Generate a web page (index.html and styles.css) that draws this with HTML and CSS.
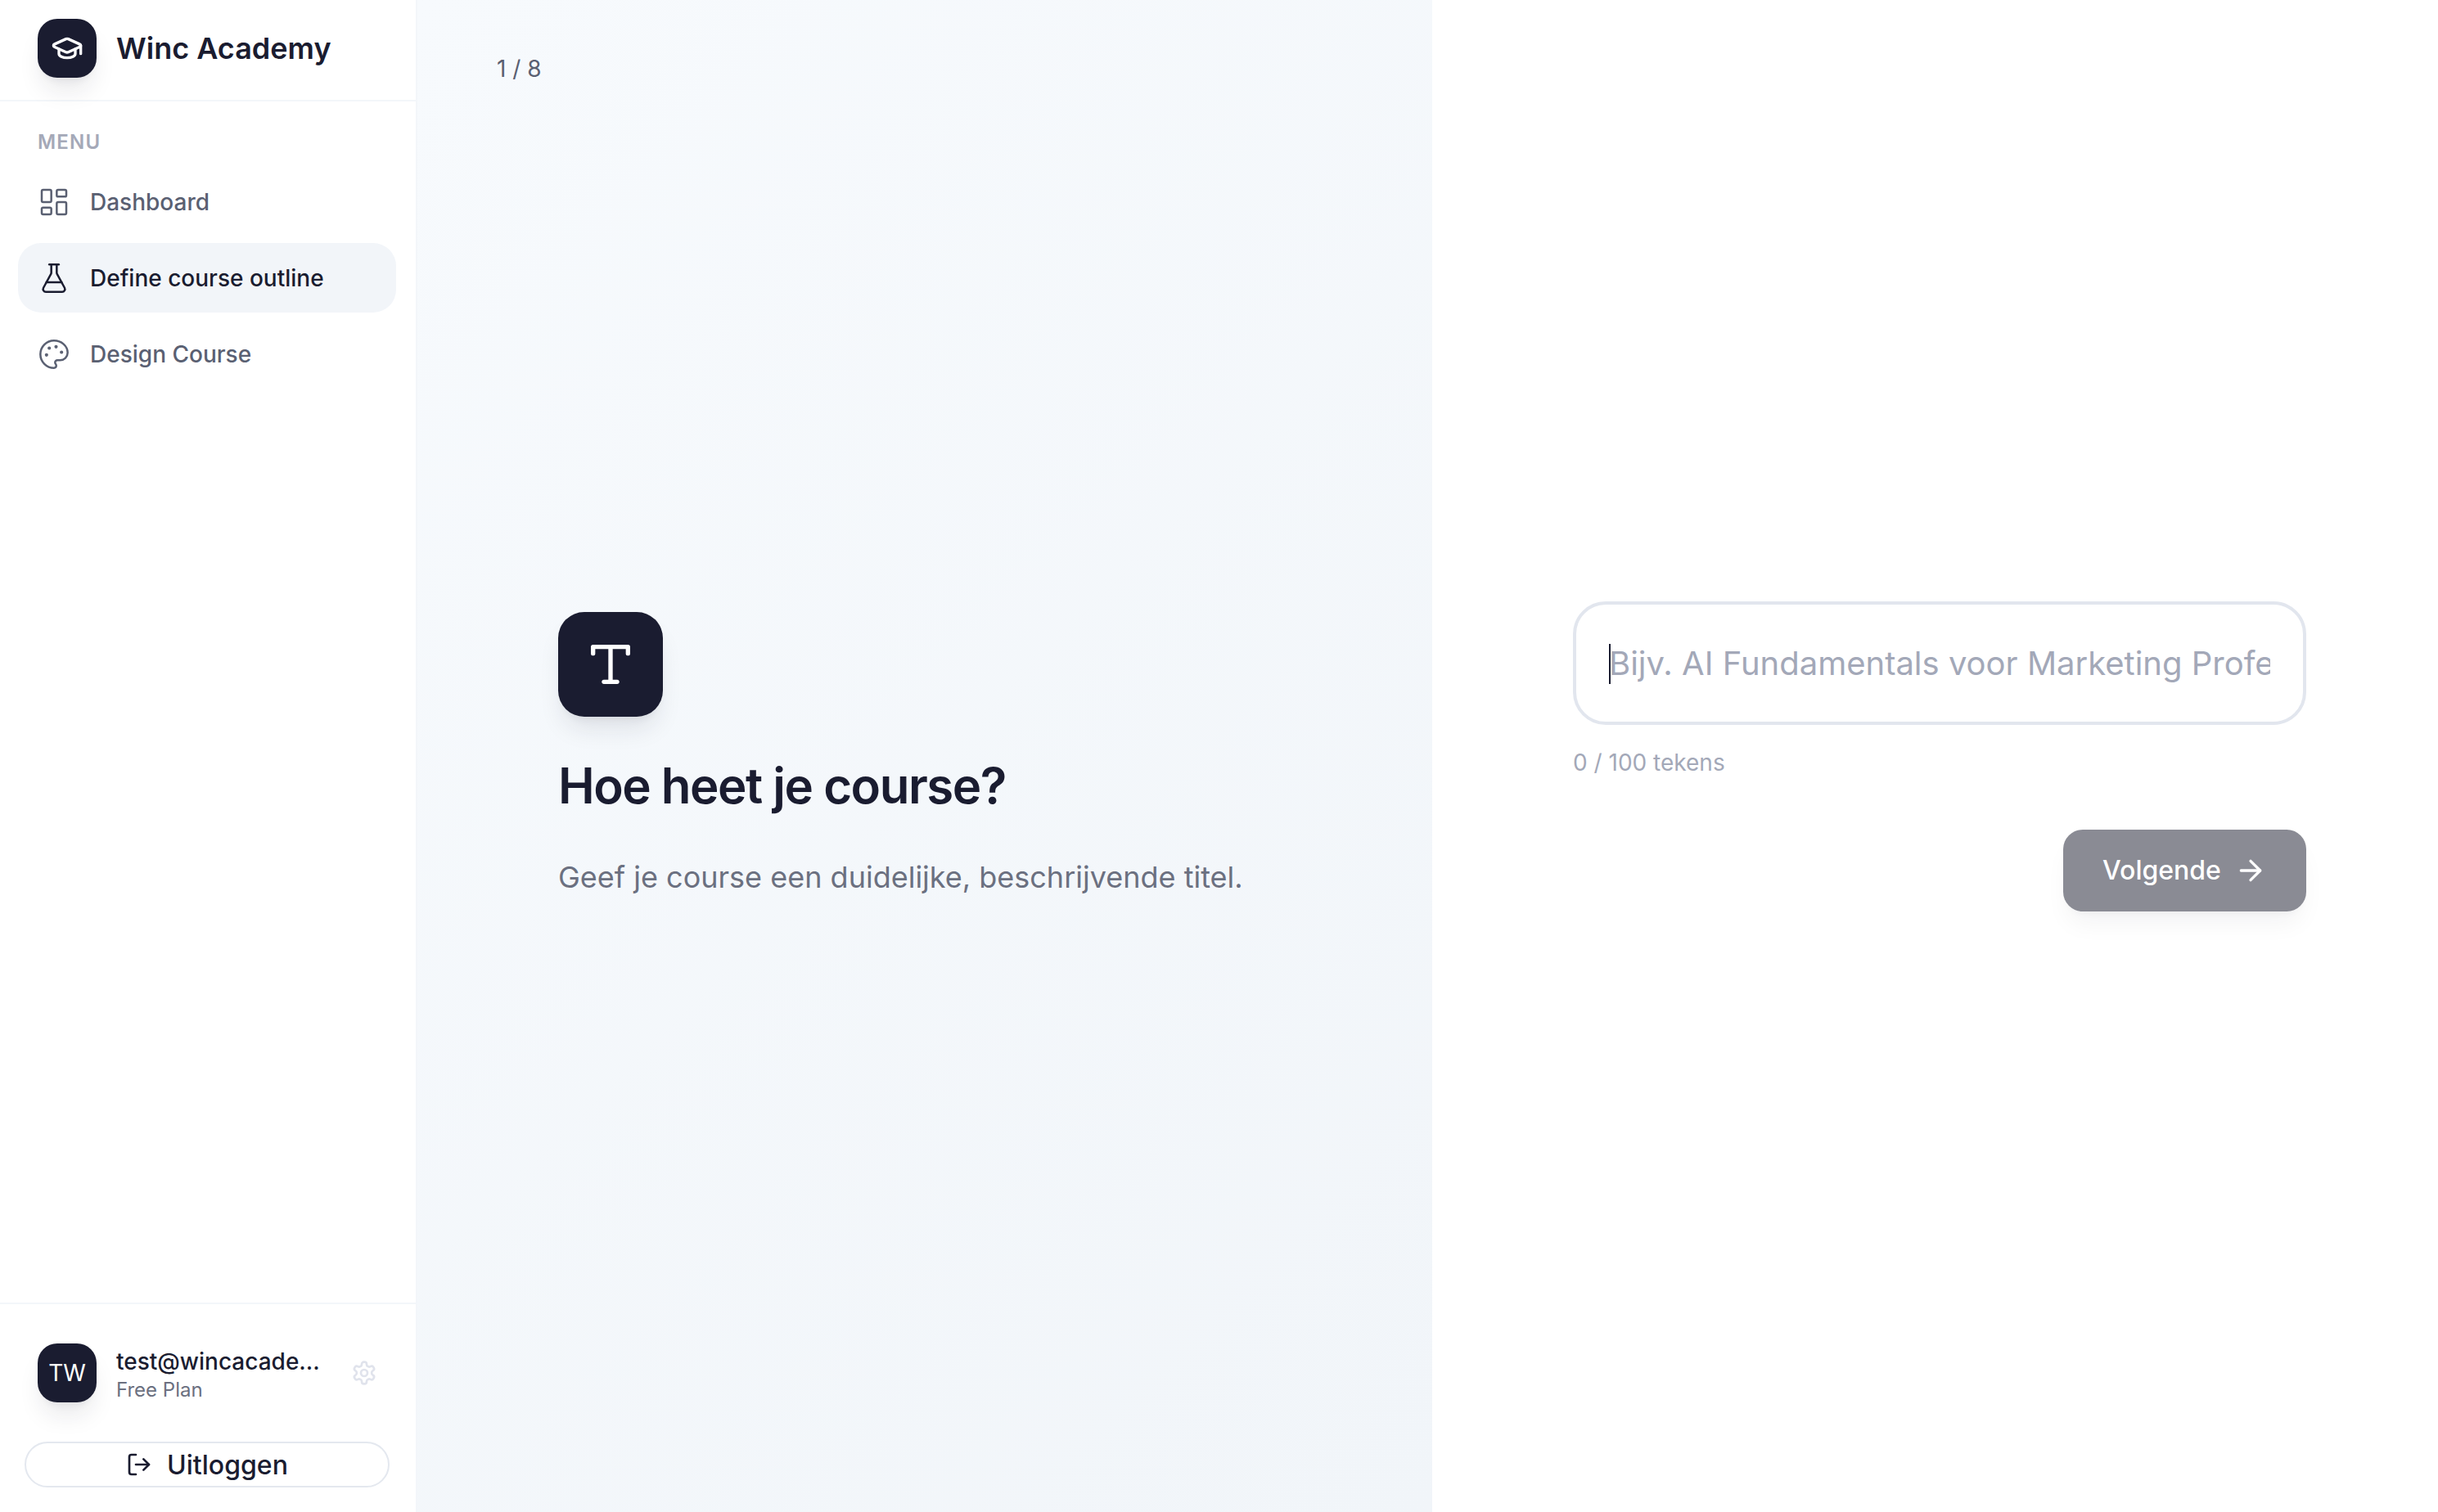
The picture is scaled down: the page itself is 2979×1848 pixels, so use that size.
FILE: index.html
```html
<!DOCTYPE html>
<html lang="en">
<head>
    <meta charset="UTF-8">
    <meta name="viewport" content="width=device-width, initial-scale=1.0">
    <title>Winc Academy</title>
    <link rel="stylesheet" href="styles.css">
</head>
<body>
    <aside class="sidebar">
        <div class="brand">
            <div class="tile">
                <svg class="icon icon-40" viewBox="0 0 24 24"><path d="M21.42 10.922a1 1 0 0 0-.019-1.838L12.83 5.18a2 2 0 0 0-1.66 0L2.6 9.08a1 1 0 0 0 0 1.832l8.57 3.908a2 2 0 0 0 1.66 0z"/><path d="M22 10v6"/><path d="M6 12.5V16a6 3 0 0 0 12 0v-3.5"/></svg>
            </div>
            <span class="brand-name">Winc Academy</span>
        </div>

        <nav class="menu">
            <p class="menu-label">MENU</p>
            <a class="menu-item" href="#">
                <svg class="icon icon-40" viewBox="0 0 24 24"><rect width="7" height="9" x="3" y="3" rx="1"/><rect width="7" height="5" x="14" y="3" rx="1"/><rect width="7" height="9" x="14" y="12" rx="1"/><rect width="7" height="5" x="3" y="16" rx="1"/></svg>
                Dashboard
            </a>
            <a class="menu-item active" href="#">
                <svg class="icon icon-40" viewBox="0 0 24 24"><path d="M14 2v6a2 2 0 0 0 .245.96l5.51 10.08A2 2 0 0 1 18 22H6a2 2 0 0 1-1.755-2.96l5.51-10.08A2 2 0 0 0 10 8V2"/><path d="M6.453 15h11.094"/><path d="M8.5 2h7"/></svg>
                Define course outline
            </a>
            <a class="menu-item" href="#">
                <svg class="icon icon-40" viewBox="0 0 24 24"><circle cx="13.5" cy="6.5" r=".5" fill="currentColor"/><circle cx="17.5" cy="10.5" r=".5" fill="currentColor"/><circle cx="8.5" cy="7.5" r=".5" fill="currentColor"/><circle cx="6.5" cy="12.5" r=".5" fill="currentColor"/><path d="M12 2C6.5 2 2 6.5 2 12s4.5 10 10 10c.926 0 1.648-.746 1.648-1.688 0-.437-.18-.835-.437-1.125-.29-.289-.438-.652-.438-1.125a1.64 1.64 0 0 1 1.668-1.668h1.996c3.051 0 5.555-2.503 5.555-5.554C21.965 6.012 17.461 2 12 2z"/></svg>
                Design Course
            </a>
        </nav>

        <div class="account">
            <div class="user">
                <div class="tile initials">TW</div>
                <div class="user-text">
                    <div class="user-mail">test@wincacade...</div>
                    <div class="user-plan">Free Plan</div>
                </div>
                <svg class="icon icon-32 gear" viewBox="0 0 24 24"><path d="M12.22 2h-.44a2 2 0 0 0-2 2v.18a2 2 0 0 1-1 1.73l-.43.25a2 2 0 0 1-2 0l-.15-.08a2 2 0 0 0-2.73.73l-.22.38a2 2 0 0 0 .73 2.73l.15.1a2 2 0 0 1 1 1.72v.51a2 2 0 0 1-1 1.74l-.15.09a2 2 0 0 0-.73 2.73l.22.38a2 2 0 0 0 2.73.73l.15-.08a2 2 0 0 1 2 0l.43.25a2 2 0 0 1 1 1.73V20a2 2 0 0 0 2 2h.44a2 2 0 0 0 2-2v-.18a2 2 0 0 1 1-1.73l.43-.25a2 2 0 0 1 2 0l.15.08a2 2 0 0 0 2.73-.73l.22-.39a2 2 0 0 0-.73-2.73l-.15-.08a2 2 0 0 1-1-1.74v-.5a2 2 0 0 1 1-1.74l.15-.09a2 2 0 0 0 .73-2.73l-.22-.38a2 2 0 0 0-2.73-.73l-.15.08a2 2 0 0 1-2 0l-.43-.25a2 2 0 0 1-1-1.73V4a2 2 0 0 0-2-2z"/><circle cx="12" cy="12" r="3"/></svg>
            </div>
            <button class="logout">
                <svg class="icon icon-32" viewBox="0 0 24 24"><path d="M9 21H5a2 2 0 0 1-2-2V5a2 2 0 0 1 2-2h4"/><polyline points="16 17 21 12 16 7"/><line x1="21" y1="12" x2="9" y2="12"/></svg>
                Uitloggen
            </button>
        </div>
    </aside>

    <main class="question">
        <div class="step">1 / 8</div>
        <div class="question-body">
            <div class="tile tile-large">
                <svg class="icon icon-64" viewBox="0 0 24 24"><polyline points="4 7 4 4 20 4 20 7"/><line x1="9" y1="20" x2="15" y2="20"/><line x1="12" y1="4" x2="12" y2="20"/></svg>
            </div>
            <h1>Hoe heet je course?</h1>
            <p>Geef je course een duidelijke, beschrijvende titel.</p>
        </div>
    </main>

    <section class="answer">
        <div class="field">
            <input type="text" placeholder="Bijv. AI Fundamentals voor Marketing Professionals">
            <span class="caret"></span>
        </div>
        <div class="counter">0 / 100 tekens</div>
        <button class="next">
            Volgende
            <svg class="icon icon-40" viewBox="0 0 24 24"><path d="M5 12h14"/><path d="m12 5 7 7-7 7"/></svg>
        </button>
    </section>
</body>
</html>
```

FILE: styles.css
```css
* {
    box-sizing: border-box;
}
body {
    font-family: Inter, "Noto Sans", sans-serif;
    display: flex;
    height: 100vh;
    margin: 0;
    color: #1a1c30;
    background: #fff;
    overflow: hidden;
}

.icon {
    fill: none;
    stroke: currentColor;
    stroke-width: 2;
    stroke-linecap: round;
    stroke-linejoin: round;
    flex-shrink: 0;
}
.icon-32 { width: 32px; height: 32px; }
.icon-40 { width: 40px; height: 40px; }
.icon-64 { width: 64px; height: 64px; }

.tile {
    width: 72px;
    height: 72px;
    border-radius: 24px;
    background: #1a1c30;
    color: #fff;
    display: flex;
    align-items: center;
    justify-content: center;
    flex-shrink: 0;
    box-shadow: 0 20px 30px -6px rgba(26, 28, 48, 0.1), 0 8px 12px -8px rgba(26, 28, 48, 0.1);
}
.tile-large {
    width: 128px;
    height: 128px;
    border-radius: 32px;
}

/* sidebar */
.sidebar {
    width: 510px;
    flex-shrink: 0;
    display: flex;
    flex-direction: column;
    border-right: 2px solid #f3f6fa;
}
.brand {
    height: 124px;
    padding: 0 46px 4px;
    display: flex;
    align-items: center;
    gap: 24px;
    border-bottom: 2px solid #f3f6fa;
}
.brand-name {
    font-size: 36px;
    font-weight: 600;
}
.menu {
    flex: 1;
    padding: 0 24px 0 22px;
    display: flex;
    flex-direction: column;
    gap: 8px;
}
.menu-label {
    margin: 34px 0 6px 24px;
    font-size: 24px;
    line-height: 32px;
    font-weight: 600;
    letter-spacing: 1.2px;
    color: #a5a9b8;
}
.menu-item {
    height: 85px;
    padding: 0 24px;
    display: flex;
    align-items: center;
    gap: 24px;
    border-radius: 28px;
    font-size: 28px;
    font-weight: 500;
    color: #5a6072;
    text-decoration: none;
}
.menu-item .icon {
    stroke-width: 1.5;
}
.menu-item.active {
    background: #f2f5f9;
    color: #1a1c30;
}
.account {
    height: 256px;
    padding: 0 32px 0 30px;
    border-top: 2px solid #f3f6fa;
}
.user {
    margin-top: 48px;
    padding-left: 16px;
    display: flex;
    align-items: center;
    gap: 24px;
}
.initials {
    font-size: 28px;
}
.user-text {
    flex: 1;
    padding-top: 2px;
}
.user-mail {
    font-size: 28px;
    line-height: 40px;
    font-weight: 500;
}
.user-plan {
    font-size: 24px;
    line-height: 30px;
    color: #6b7080;
}
.gear {
    color: #e0e3ec;
    margin-right: 15px;
}
.logout {
    width: 100%;
    height: 56px;
    margin-top: 48px;
    display: flex;
    align-items: center;
    justify-content: center;
    gap: 18px;
    background: #fff;
    border: 2px solid #e4e8ef;
    border-radius: 28px;
    font-family: inherit;
    font-size: 32px;
    font-weight: 500;
    color: #1a1c30;
}

/* left question panel */
.question {
    width: 1240px;
    flex-shrink: 0;
    height: 100%;
    padding: 0 0 2px 97px;
    background: linear-gradient(135deg, #f7fafd, #f1f5f9);
    display: grid;
    grid-template-rows: 1fr auto 1fr;
}
.step {
    margin-top: 66px;
    font-size: 28px;
    line-height: 36px;
    color: #5a6072;
}
.question-body {
    margin-left: 75px;
}
.question-body h1 {
    margin: 48px 0 0;
    font-size: 60px;
    line-height: 72px;
    font-weight: 600;
    letter-spacing: -1.5px;
}
.question-body p {
    margin: 50px 0 0;
    font-size: 36px;
    line-height: 52px;
    color: #6b7080;
}

/* right answer panel */
.answer {
    flex: 1;
    padding: 0 161px 0 172px;
    display: flex;
    flex-direction: column;
    justify-content: center;
}
.field {
    position: relative;
}
.field input {
    display: block;
    width: 100%;
    height: 151px;
    padding: 0 40px;
    border: 4px solid #e2e6ee;
    border-radius: 40px;
    outline: none;
    font-family: inherit;
    font-size: 40px;
    color: #1a1c30;
}
.field input::placeholder {
    color: #a3a8b8;
}
.caret {
    position: absolute;
    left: 44px;
    top: 52px;
    width: 2px;
    height: 49px;
    background: #1a1c30;
}
.counter {
    margin-top: 28px;
    font-size: 28px;
    line-height: 36px;
    color: #a3a8b8;
}
.next {
    align-self: flex-end;
    width: 297px;
    height: 100px;
    margin-top: 64px;
    display: flex;
    align-items: center;
    justify-content: center;
    gap: 16px;
    border: none;
    border-radius: 24px;
    background: #8a8b94;
    color: #fff;
    font-family: inherit;
    font-size: 32px;
    font-weight: 500;
    box-shadow: 0 20px 30px -6px rgba(26, 28, 48, 0.05), 0 8px 12px -8px rgba(26, 28, 48, 0.05);
}
```
